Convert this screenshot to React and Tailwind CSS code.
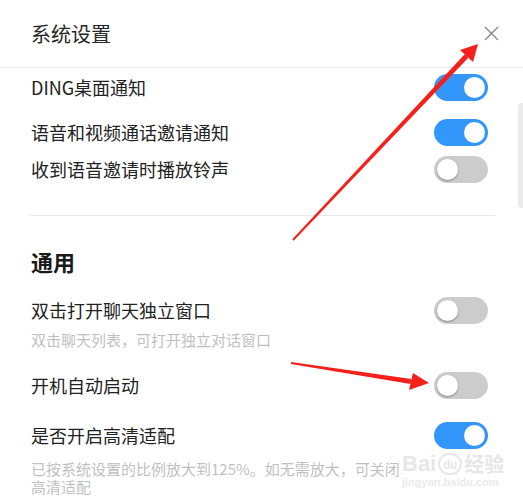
import React from "react";

const FONT = {
  fontFamily: '"Microsoft YaHei", "Noto Sans CJK SC", "Noto Sans", sans-serif',
};

function Toggle({ on }) {
  return (
    <div
      className={
        "w-[54px] h-[27px] rounded-full p-[3px] flex shrink-0 " +
        (on ? "bg-[#3296fa] justify-end" : "bg-[#cccccc] justify-start")
      }
    >
      <div
        className={
          "w-[21px] h-[21px] rounded-full bg-white " +
          (on ? "" : "shadow-[0_1px_2px_rgba(0,0,0,0.35)]")
        }
      />
    </div>
  );
}

function Row({ label, on, className = "" }) {
  return (
    <div className={"flex items-center justify-between h-[27px] " + className}>
      <span className="text-[18px] text-[#222] leading-[27px]">{label}</span>
      <Toggle on={on} />
    </div>
  );
}

function Arrows() {
  return (
    <svg
      className="absolute inset-0 pointer-events-none"
      width="523"
      height="500"
      viewBox="0 0 523 500"
    >
      {/* arrow to close button */}
      <polygon
        points="293.7,240.7 292.3,239.3 464.7,54.3 468.3,57.7"
        fill="#f5201a"
      />
      <polygon points="460,50 478,44 473,62" fill="#f5201a" />
      {/* arrow to auto start */}
      <polygon
        points="290.9,364 291.1,362 411.4,379 410.6,384"
        fill="#f5201a"
      />
      <polygon points="413,373 429,383 409,390" fill="#f5201a" />
    </svg>
  );
}

export default function App() {
  return (
    <div
      className="w-[523px] h-[500px] bg-white relative overflow-hidden"
      style={FONT}
    >
      {/* header */}
      <div className="h-[68px] border-b border-[#e8e8e8] flex items-center justify-between pl-[31px] pr-[24px]">
        <span className="text-[20px] text-[#262626]">系统设置</span>
        <svg width="15" height="15" viewBox="0 0 15 15">
          <path d="M1 1L14 14M14 1L1 14" stroke="#8a8a8a" strokeWidth="1.4" />
        </svg>
      </div>

      {/* body */}
      <div className="pl-[31px] pr-[35px]">
        <Row label="DING桌面通知" on className="mt-[6px]" />
        <Row label="语音和视频通话邀请通知" on className="mt-[18px]" />
        <Row label="收到语音邀请时播放铃声" className="mt-[10px]" />

        <div className="mt-[32px] -ml-[1px] -mr-[7px] border-t border-[#e8e8e8]" />

        <div className="mt-[30px] h-[30px] leading-[30px] text-[22px] font-bold text-[#1a1a1a]">
          通用
        </div>

        <Row label="双击打开聊天独立窗口" className="mt-[21px]" />
        <div className="mt-[6px] text-[15px] leading-[20px] text-[#bfbfbf]">
          双击聊天列表，可打开独立对话窗口
        </div>

        <Row label="开机自动启动" className="mt-[22px]" />
        <Row label="是否开启高清适配" on className="mt-[23px]" />
        <div className="mt-[11px] w-[376px] text-[15px] leading-[18px] text-[#bfbfbf]">
          已按系统设置的比例放大到125%。如无需放大，可关闭高清适配
        </div>
      </div>

      {/* scrollbar */}
      <div className="absolute right-0 top-[103px] w-[5px] h-[105px] rounded-l bg-[#ebebeb]" />

      {/* watermark */}
      <div className="absolute left-[402px] top-[452px] flex flex-col items-start opacity-80 pointer-events-none">
        <div className="flex items-center gap-[2px] text-[22px] leading-[24px] font-bold text-[#e2e2e2]">
          <span style={{ fontFamily: '"Liberation Sans", Arial, sans-serif' }}>Bai</span>
          <span className="w-[24px] h-[22px] rounded-full border-[2px] border-[#e2e2e2] text-[11px] leading-[18px] text-center">
            du
          </span>
          <span className="text-[20px]">经验</span>
        </div>
        <span
          className="text-[11px] leading-[12px] font-bold text-[#e6e6e6]"
          style={{ fontFamily: '"Liberation Sans", Arial, sans-serif' }}
        >
          jingyan.baidu.com
        </span>
      </div>

      <Arrows />
    </div>
  );
}
